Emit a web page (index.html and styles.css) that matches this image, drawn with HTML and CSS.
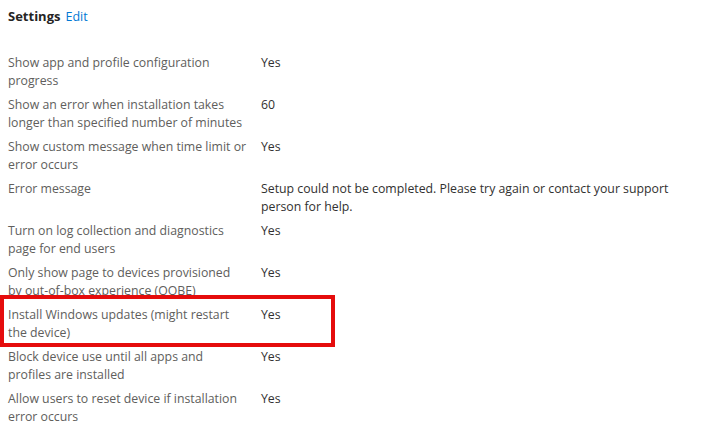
FILE: index.html
```html
<!DOCTYPE html>
<html>
<head>
<meta charset="utf-8">
<link rel="stylesheet" href="styles.css">
</head>
<body>
<div class="page">
  <div class="header">
    <span class="title">Settings</span>
    <a class="edit" href="#">Edit</a>
  </div>
  <div class="list">
    <div class="row">
      <div class="label">Show app and profile configuration<br>progress</div>
      <div class="value">Yes</div>
    </div>
    <div class="row">
      <div class="label">Show an error when installation takes<br>longer than specified number of minutes</div>
      <div class="value">60</div>
    </div>
    <div class="row">
      <div class="label">Show custom message when time limit or<br>error occurs</div>
      <div class="value">Yes</div>
    </div>
    <div class="row">
      <div class="label">Error message</div>
      <div class="value">Setup could not be completed. Please try again or contact your support<br>person for help.</div>
    </div>
    <div class="row">
      <div class="label">Turn on log collection and diagnostics<br>page for end users</div>
      <div class="value">Yes</div>
    </div>
    <div class="row">
      <div class="label">Only show page to devices provisioned<br>by out-of-box experience (OOBE)</div>
      <div class="value">Yes</div>
    </div>
    <div class="row highlighted">
      <div class="label">Install Windows updates (might restart<br>the device)</div>
      <div class="value">Yes</div>
    </div>
    <div class="row">
      <div class="label">Block device use until all apps and<br>profiles are installed</div>
      <div class="value">Yes</div>
    </div>
    <div class="row">
      <div class="label">Allow users to reset device if installation<br>error occurs</div>
      <div class="value">Yes</div>
    </div>
  </div>
</div>
</body>
</html>
```
FILE: styles.css
```css
html, body {
  margin: 0;
  padding: 0;
  background: #ffffff;
}
body {
  font-family: "Open Sans", "Noto Sans", sans-serif;
  font-size: 12.3px;
  line-height: 18px;
  color: #323130;
}
.page {
  padding: 7px 8px 0 8px;
}
.header {
  display: flex;
  align-items: baseline;
  gap: 5px;
  height: 18px;
}
.title {
  font-weight: 700;
  font-size: 13px;
  color: #252423;
}
.edit {
  color: #0078d4;
  text-decoration: none;
  font-size: 12.5px;
}
.list {
  display: flex;
  flex-direction: column;
  gap: 6px;
  margin-top: 29px;
}
.row {
  display: flex;
  min-height: 36px;
}
.label {
  width: 253px;
  flex: none;
  color: #605e5c;
  white-space: nowrap;
}
.value {
  color: #323130;
  white-space: nowrap;
}
.highlighted {
  position: relative;
}
.highlighted::after {
  content: "";
  position: absolute;
  left: -8px;
  top: -11px;
  width: 327px;
  height: 44px;
  border: 4px solid #e50c0c;
}
```
